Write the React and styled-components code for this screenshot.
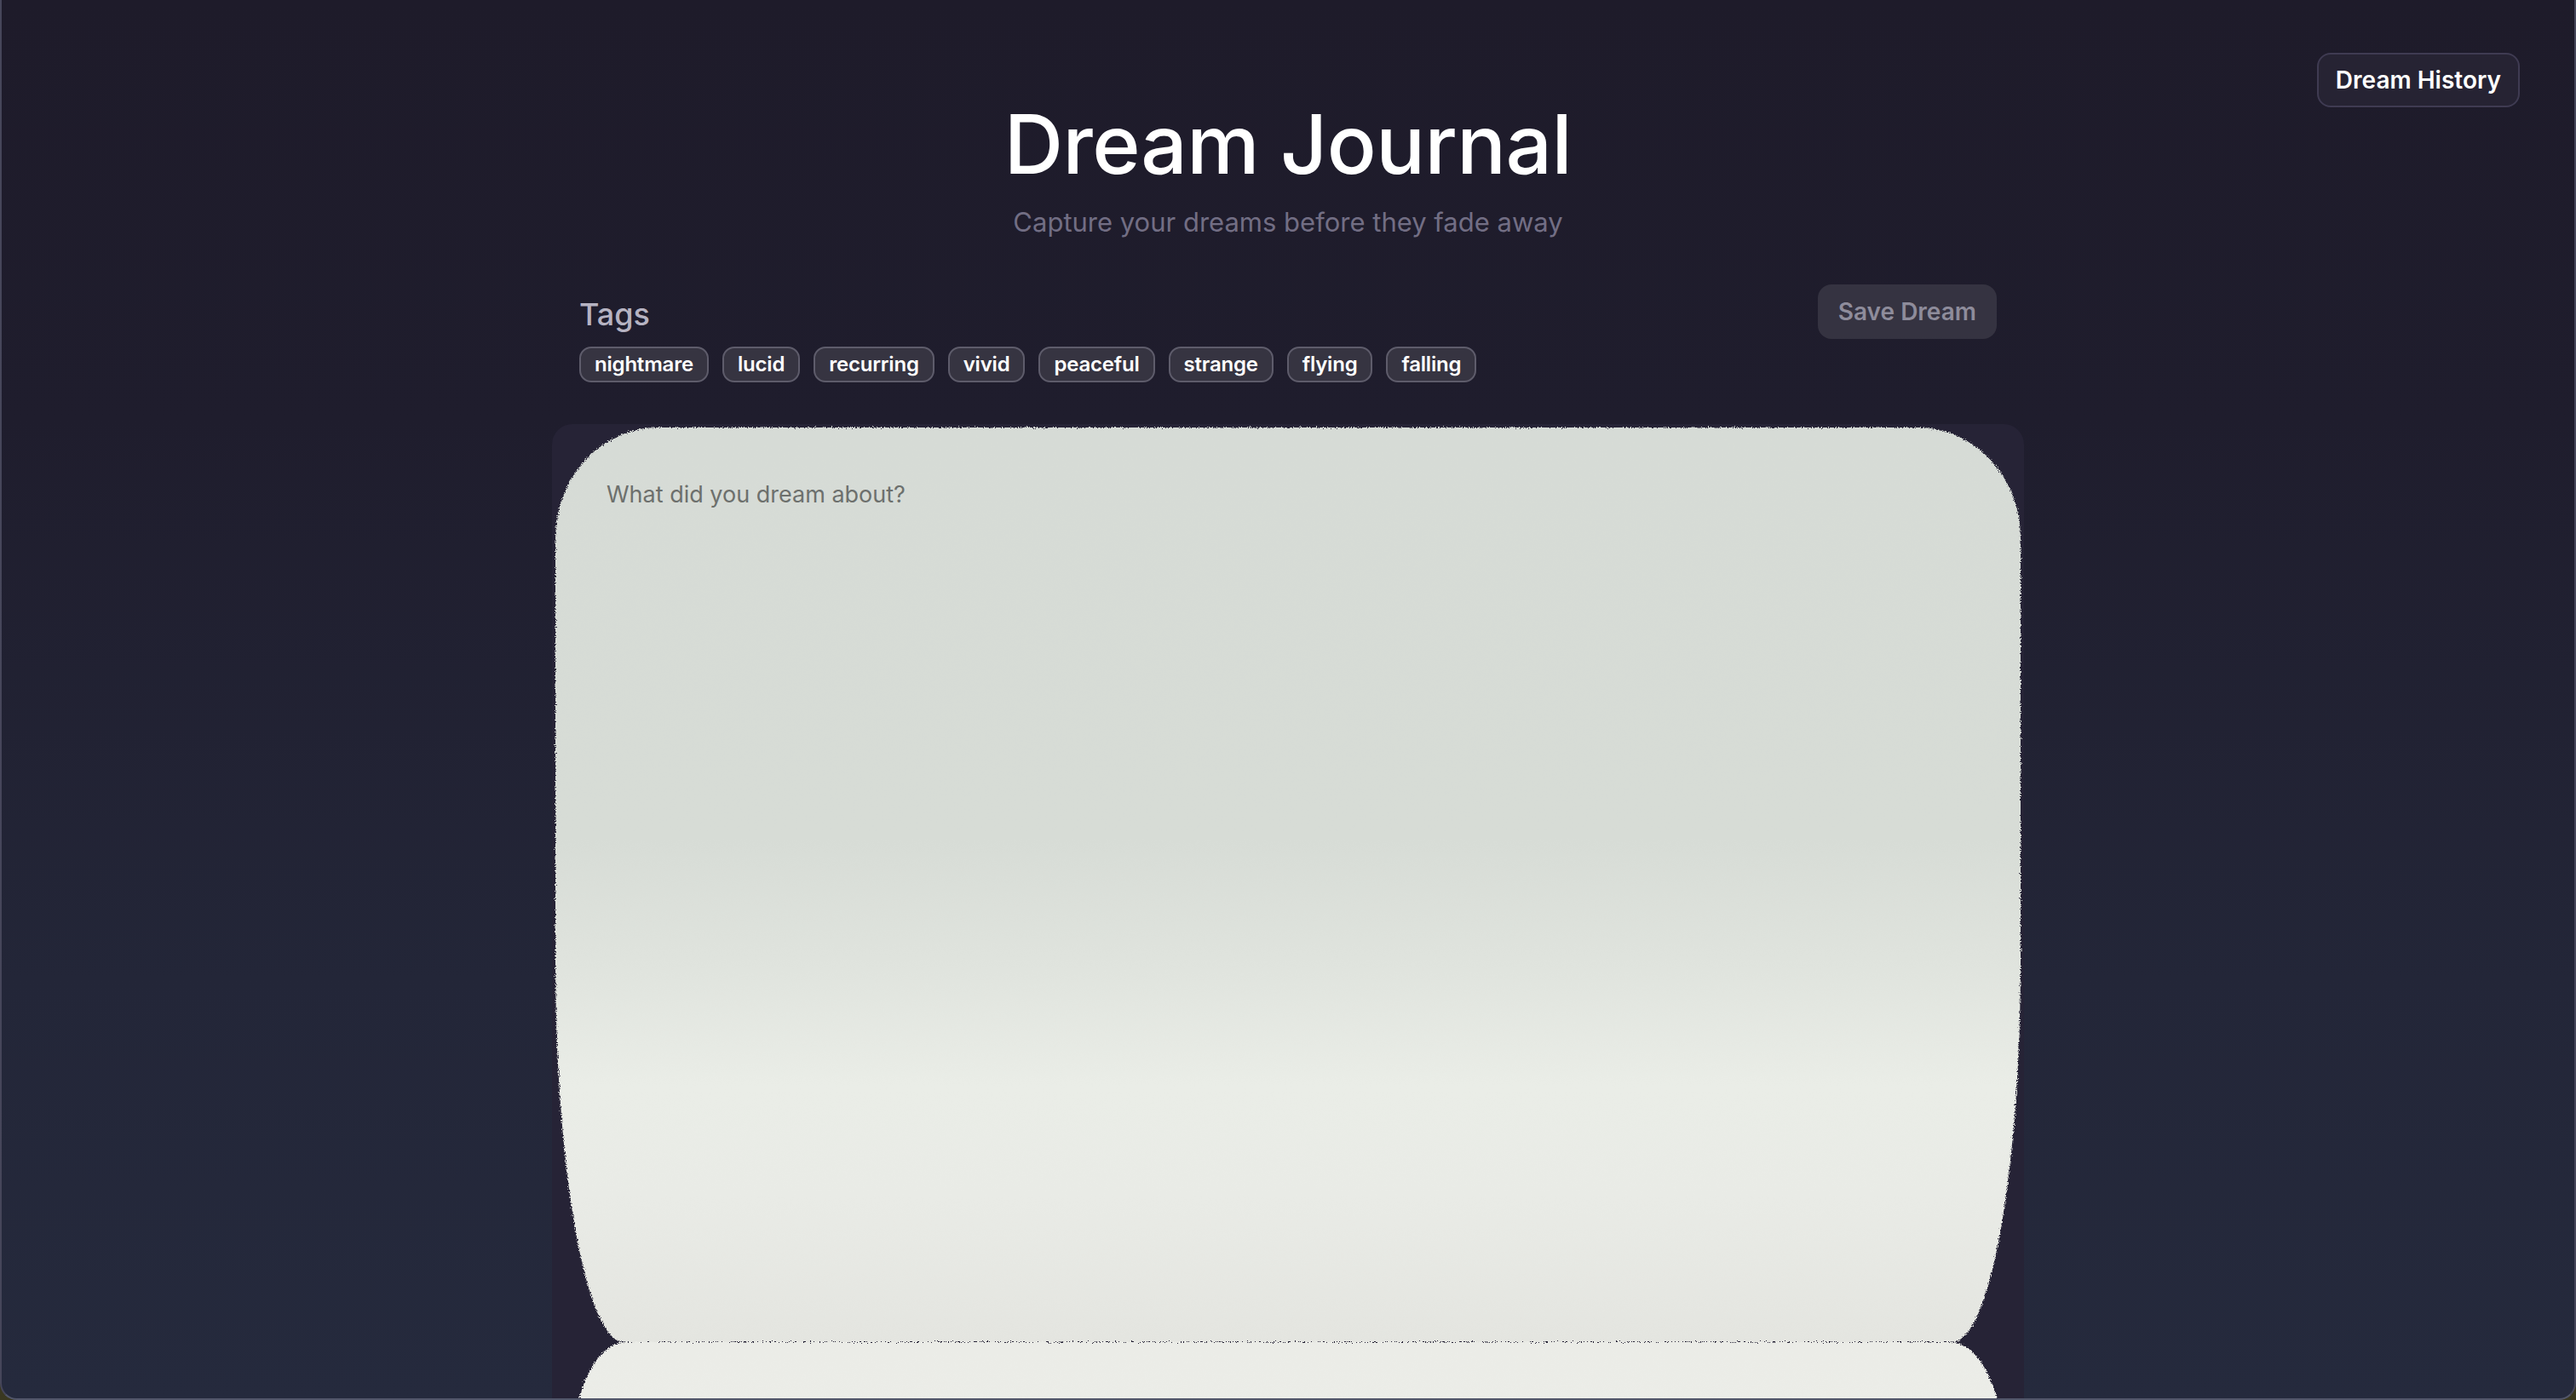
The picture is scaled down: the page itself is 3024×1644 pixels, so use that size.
import React from "react";
import styled, { createGlobalStyle } from "styled-components";

const Global = createGlobalStyle`
  *, *::before, *::after { box-sizing: border-box; }
  html, body { margin: 0; padding: 0; height: 100%; overflow: hidden; }
  body {
    background: #3a3820;
    font-family: Inter, "Noto Sans", "Liberation Sans", sans-serif;
  }
`;

const Frame = styled.div`
  position: relative;
  width: 100vw;
  height: 100vh;
  overflow: hidden;
  background: linear-gradient(180deg, #1e1b2a 0%, #1f1d2d 30%, #232638 70%, #252a3d 100%);
  border-left: 2px solid #46465a;
  border-right: 2px solid #46465a;
  border-bottom: 2px solid #52566a;
  border-radius: 0 0 20px 20px;
`;

const Main = styled.main`
  width: 1728px;
  margin: 0 auto;
  padding-top: 112px;
  display: flex;
  flex-direction: column;
`;

const Header = styled.header`
  display: flex;
  flex-direction: column;
  align-items: center;
  gap: 10px;
`;

const Title = styled.h1`
  margin: 0;
  font-size: 96px;
  line-height: 115px;
  font-weight: 500;
  color: #ffffff;
  letter-spacing: -0.5px;
`;

const Subtitle = styled.p`
  margin: 0;
  font-size: 31px;
  line-height: 48px;
  font-weight: 400;
  color: #726e84;
`;

const Pill = styled.button`
  font-family: inherit;
  font-size: 28px;
  line-height: 42px;
  font-weight: 600;
  border-radius: 16px;
  cursor: pointer;
  padding: ${(p) => (p.$outlined ? "9px 20px" : "11px 24px")};
  background: ${(p) => (p.$outlined ? "#262333" : "#353341")};
  color: ${(p) => (p.$outlined ? "#ffffff" : "#8e8c9b")};
  border: ${(p) => (p.$outlined ? "2px solid #3f3b52" : "none")};
`;

const HistoryButton = styled(Pill)`
  position: absolute;
  top: 62px;
  right: 64px;
`;

const Toolbar = styled.div`
  margin-top: 49px;
  padding: 0 32px;
  display: flex;
  justify-content: space-between;
  align-items: flex-start;
`;

const TagGroup = styled.div`
  padding-top: 8px;
  display: flex;
  flex-direction: column;
  gap: 11px;
`;

const TagLabel = styled.h2`
  margin: 0;
  font-size: 36px;
  line-height: 54px;
  font-weight: 500;
  color: #b6b3c2;
`;

const TagRow = styled.div`
  display: flex;
  gap: 16px;
`;

const Tag = styled.button`
  font-family: inherit;
  font-size: 24px;
  line-height: 32px;
  font-weight: 600;
  color: #ffffff;
  background: #363441;
  border: 2px solid #5e5c6b;
  border-radius: 14px;
  padding: 3px 16px;
  letter-spacing: -0.2px;
  cursor: pointer;
`;

const Card = styled.section`
  margin-top: 49px;
  padding: 4px;
  background: #262336;
  border-radius: 24px;
  display: flex;
  flex-direction: column;
`;

const Paper = styled.div`
  position: relative;
  height: 1074px;
`;

const PaperSurface = styled.div`
  position: absolute;
  inset: 0;
  border-radius: 120px 120px 80px 80px / 130px 130px 450px 450px;
  background: linear-gradient(
    180deg,
    #d6dbd6 0%,
    #d7dcd6 45%,
    #dfe3dd 58%,
    #eaede7 72%,
    #e9ebe6 84%,
    #e4e5e0 100%
  );
  filter: url(#rough-edge);
`;

const Entry = styled.textarea`
  position: relative;
  display: block;
  width: 100%;
  height: 100%;
  padding: 58px 60px;
  border: none;
  outline: none;
  resize: none;
  background: transparent;
  font-family: inherit;
  font-size: 27px;
  line-height: 42px;
  color: #2d2f2d;

  &::placeholder {
    color: #6d706d;
  }
`;

const NextSheet = styled.div`
  margin: 0 18px;
  height: 260px;
  border-radius: 64px 64px 0 0 / 140px 140px 0 0;
  background: linear-gradient(180deg, #ebece7 0%, #eceee9 100%);
  filter: url(#rough-edge);
`;

const FilterDefs = styled.svg`
  position: absolute;
  width: 0;
  height: 0;
`;

const TAGS = ["nightmare", "lucid", "recurring", "vivid", "peaceful", "strange", "flying", "falling"];

export default function App() {
  return (
    <>
      <Global />
      <FilterDefs aria-hidden="true">
        <filter id="rough-edge" x="-2%" y="-2%" width="104%" height="104%">
          <feTurbulence type="fractalNoise" baseFrequency="0.9" numOctaves="2" seed="3" result="noise" />
          <feDisplacementMap in="SourceGraphic" in2="noise" scale="6" xChannelSelector="R" yChannelSelector="G" />
        </filter>
      </FilterDefs>
      <Frame>
        <HistoryButton $outlined>Dream History</HistoryButton>
        <Main>
          <Header>
            <Title>Dream Journal</Title>
            <Subtitle>Capture your dreams before they fade away</Subtitle>
          </Header>
          <Toolbar>
            <TagGroup>
              <TagLabel>Tags</TagLabel>
              <TagRow>
                {TAGS.map((t) => (
                  <Tag key={t}>{t}</Tag>
                ))}
              </TagRow>
            </TagGroup>
            <Pill>Save Dream</Pill>
          </Toolbar>
          <Card>
            <Paper>
              <PaperSurface />
              <Entry placeholder="What did you dream about?" />
            </Paper>
            <NextSheet />
          </Card>
        </Main>
      </Frame>
    </>
  );
}
